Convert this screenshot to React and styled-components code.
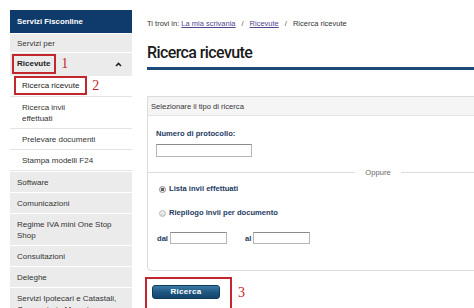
import React from 'react';
import styled, { createGlobalStyle } from 'styled-components';

const GlobalStyle = createGlobalStyle`
  html, body {
    margin: 0;
    padding: 0;
    background: #ffffff;
    overflow: hidden;
  }
  body {
    width: 474px;
    height: 308px;
    font-family: 'Liberation Sans', Arial, sans-serif;
    color: #333;
  }
`;

const subItems = [
  { label: 'Ricerca ricevute', mark: '2' },
  { label: 'Ricerca invii\neffettuati' },
  { label: 'Prelevare documenti' },
  { label: 'Stampa modelli F24' },
];

const menuBottom = [
  'Software',
  'Comunicazioni',
  'Regime IVA mini One Stop\nShop',
  'Consultazioni',
  'Deleghe',
  'Servizi Ipotecari e Catastali,\nOsservatorio Mercato Immobiliare',
];

const Chevron = () => (
  <svg width="7" height="5" viewBox="0 0 7 5">
    <path d="M1 4 L3.5 1.5 L6 4" fill="none" stroke="#222" strokeWidth="1.6" />
  </svg>
);

class App extends React.Component {
  render() {
    return (
      <>
        <GlobalStyle />
        <StPage>
          <StSidebar>
            <StSideHead>Servizi Fisconline</StSideHead>
            <StMenuRow first>Servizi per</StMenuRow>
            <StMenuRow open>
              <StAnnot>
                <StRedBox bold>Ricevute</StRedBox>
                <StMark>1</StMark>
              </StAnnot>
              <Chevron />
            </StMenuRow>
            {subItems.map((s, i) => (
              <StSubRow key={i} marked={!!s.mark}>
                {s.mark ? (
                  <StAnnot>
                    <StRedBox>{s.label}</StRedBox>
                    <StMark>{s.mark}</StMark>
                  </StAnnot>
                ) : s.label}
              </StSubRow>
            ))}
            {menuBottom.map((m, i) => (
              <StMenuRow key={i}>{m}</StMenuRow>
            ))}
          </StSidebar>

          <StMain>
            <StCrumbs>
              Ti trovi in: <StLink>La mia scrivania</StLink>
              <StSep>/</StSep>
              <StLink>Ricevute</StLink>
              <StSep>/</StSep>
              Ricerca ricevute
            </StCrumbs>
            <StTitle>Ricerca ricevute</StTitle>

            <StPanel>
              <StPanelHead>Selezionare il tipo di ricerca</StPanelHead>
              <StSection>
                <StLabel>Numero di protocollo:</StLabel>
                <StInput w={96} h={13} />
              </StSection>
              <StDivider><span>Oppure</span></StDivider>
              <StSection bottom>
                <StRadioRow>
                  <StRadio checked /> Lista invii effettuati
                </StRadioRow>
                <StRadioRow>
                  <StRadio /> Riepilogo invii per documento
                </StRadioRow>
                <StDateRow>
                  <StDateField>
                    dal <StInput w={57} h={12} />
                  </StDateField>
                  <StDateField>
                    al <StInput w={57} h={12} />
                  </StDateField>
                </StDateRow>
              </StSection>
            </StPanel>

            <StActions>
              <StButtonBox>
                <StButton>Ricerca</StButton>
              </StButtonBox>
              <StMark>3</StMark>
            </StActions>
          </StMain>
        </StPage>
      </>
    );
  }
}
export default App;

const StPage = styled.div`
  display: flex;
  align-items: flex-start;
  padding: 10px 0 0 10px;
  gap: 15px;
`;

const StSidebar = styled.nav`
  flex: 0 0 122px;
  display: flex;
  flex-direction: column;
  font-size: 8px;
  color: #333;
`;

const StSideHead = styled.div`
  height: 23px;
  display: flex;
  align-items: center;
  padding-left: 7px;
  background: #0f3b6c;
  color: #fff;
  font-weight: bold;
  font-size: 7.8px;
`;

const StMenuRow = styled.div`
  display: flex;
  align-items: center;
  justify-content: space-between;
  padding: ${p => p.open ? '1px 10px 2px 2px' : p.first ? '4px 7px 3px 7px' : '5px 7px 4px 7px'};
  background: #ebebeb;
  border-top: 1px solid #ffffff;
  line-height: 11px;
  white-space: pre-line;
`;

const StSubRow = styled.div`
  padding: ${p => p.marked ? '0 0 1px 4px' : '5px 7px 4px 12px'};
  background: #fff;
  border-bottom: 1px solid #e4e4e4;
  line-height: 11px;
  white-space: pre-line;
`;

const StAnnot = styled.div`
  display: flex;
  align-items: center;
`;

const StRedBox = styled.span`
  display: inline-block;
  border: 2px solid #c1272d;
  padding: ${p => p.bold ? '3px 4px 3px 3px' : '3px 6px'};
  line-height: ${p => p.bold ? '10px' : '9px'};
  font-weight: ${p => p.bold ? 'bold' : 'normal'};
  color: #222;
`;

const StMark = styled.span`
  margin-left: 5px;
  font-family: 'Liberation Serif', 'Times New Roman', serif;
  font-size: 14px;
  line-height: 14px;
  color: #c1272d;
`;

const StMain = styled.main`
  flex: 0 0 462px;
  padding-top: 9px;
`;

const StCrumbs = styled.div`
  font-size: 7.5px;
  line-height: 10px;
  color: #333;
`;

const StLink = styled.span`
  color: #54478f;
  text-decoration: underline;
`;

const StSep = styled.span`
  margin: 0 6px;
  color: #555;
`;

const StTitle = styled.h1`
  margin: 14px 0 0 0;
  padding-bottom: 4px;
  border-bottom: 3px solid #1b4a78;
  font-family: Roboto, 'Liberation Sans', sans-serif;
  font-weight: 500;
  font-size: 16px;
  line-height: 20px;
  letter-spacing: -0.6px;
  color: #1a1a1a;
`;

const StPanel = styled.section`
  margin-top: 26px;
  border: 1px solid #dcdcdc;
  border-radius: 0 0 4px 4px;
  font-size: 7.6px;
`;

const StPanelHead = styled.div`
  height: 18px;
  display: flex;
  align-items: center;
  padding-left: 3px;
  background: #f5f5f5;
  border-bottom: 1px solid #e2e2e2;
  color: #333;
`;

const StSection = styled.div`
  display: flex;
  flex-direction: column;
  padding: ${p => p.bottom ? '7px 9px 26px 9px' : '13px 9px 0 8px'};
  gap: ${p => p.bottom ? '14px' : '5px'};
`;

const StLabel = styled.div`
  font-weight: bold;
  color: #1e3b62;
  line-height: 10px;
`;

const StInput = styled.div`
  width: ${p => p.w}px;
  height: ${p => p.h}px;
  box-sizing: border-box;
  border: 1px solid #b5b5b5;
  border-top-color: #8a8a8a;
  background: #fff;
`;

const StDivider = styled.div`
  display: flex;
  align-items: center;
  margin-top: 10px;
  height: 10px;
  color: #666;
  &::before, &::after {
    content: '';
    flex: 1;
    border-top: 1px solid #dcdcdc;
  }
  span {
    padding: 0 10px;
  }
`;

const StRadioRow = styled.div`
  display: flex;
  align-items: center;
  gap: 3px;
  padding-left: 2px;
  line-height: 10px;
  font-weight: bold;
  color: #1e3b62;
`;

const StRadio = styled.span`
  width: 5px;
  height: 5px;
  border-radius: 50%;
  border: 1px solid ${p => p.checked ? '#8c8c8c' : '#b8b8b8'};
  background: ${p => p.checked
    ? 'radial-gradient(circle, #555 0, #666 1.4px, #e8e8e8 1.8px)'
    : 'linear-gradient(#f4f4f4, #d8d8d8)'};
`;

const StDateRow = styled.div`
  display: flex;
  align-items: center;
  gap: 18px;
  height: 12px;
`;

const StDateField = styled.div`
  display: flex;
  align-items: center;
  gap: 2px;
  font-weight: bold;
  color: #1e3b62;
`;

const StActions = styled.div`
  display: flex;
  align-items: flex-start;
  margin: 6px 0 0 -2px;
  & > span {
    margin-left: 6px;
    margin-top: 9px;
  }
`;

const StButtonBox = styled.div`
  display: flex;
  border: 2px solid #c1272d;
  padding: 6px 10px 10px 5px;
`;

const StButton = styled.button`
  width: 68px;
  height: 14px;
  padding: 0;
  border: 1px solid #0f3a5c;
  border-radius: 3px;
  background: linear-gradient(#3a7aa6, #1d557f 55%, #15456c);
  color: #fff;
  font-family: 'Liberation Sans', Arial, sans-serif;
  font-weight: bold;
  font-size: 8px;
  line-height: 12px;
  letter-spacing: 0.3px;
`;
